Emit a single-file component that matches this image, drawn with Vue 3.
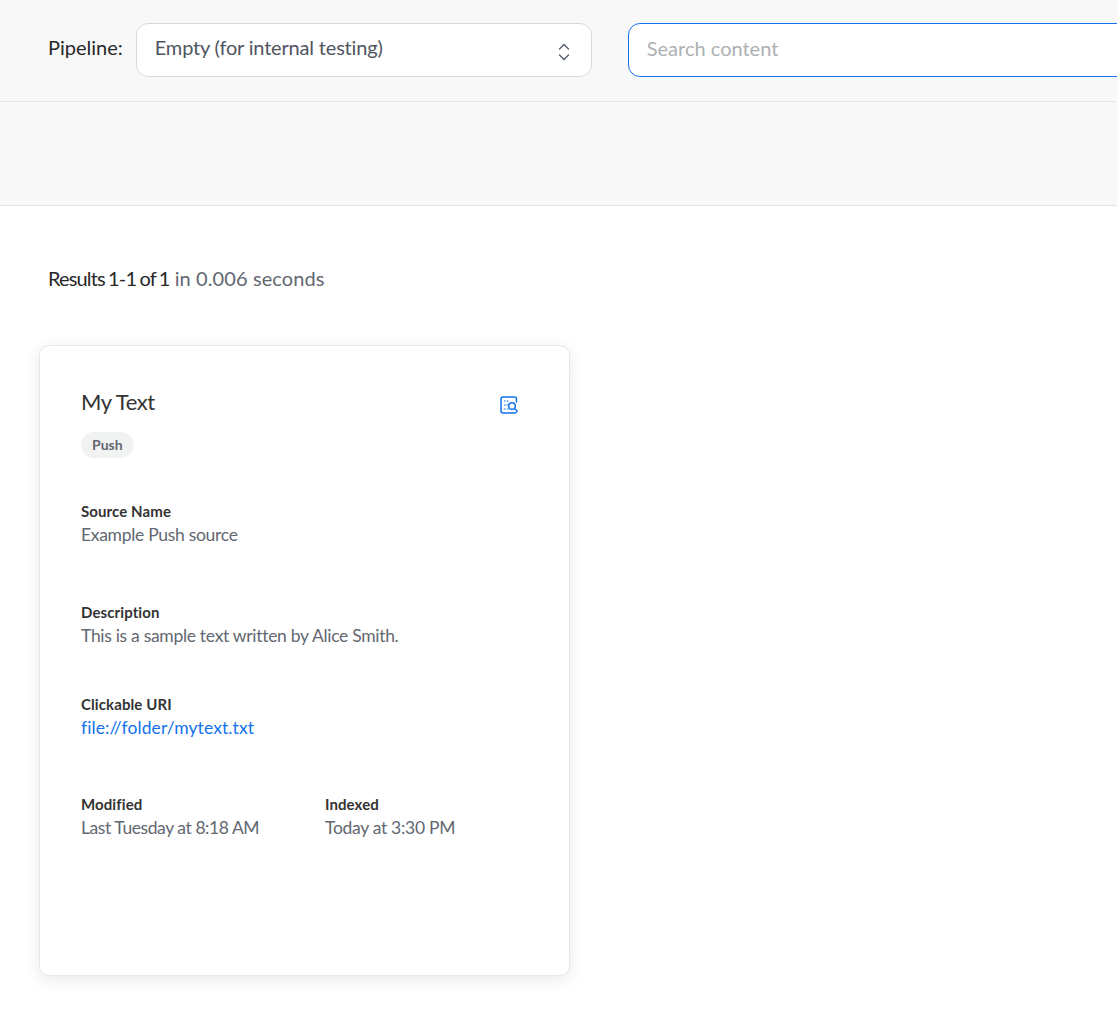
<script setup>
const fields = [
  { label: 'Source Name', value: 'Example Push source', cls: 'f-source' },
  { label: 'Description', value: 'This is a sample text written by Alice Smith.', cls: 'f-desc' },
]
</script>

<template>
  <div class="page">
    <header class="top">
      <div class="bar">
        <span class="pipe-label">Pipeline:</span>
        <div class="select">
          <span class="select-text">Empty (for internal testing)</span>
          <svg class="updown" width="12" height="18" viewBox="0 0 12 18" fill="none" stroke="#5c6370" stroke-width="1.5" stroke-linecap="round" stroke-linejoin="round">
            <path d="M1.5 6 L6 1.5 L10.5 6" />
            <path d="M1.5 12 L6 16.5 L10.5 12" />
          </svg>
        </div>
        <div class="search"><span class="placeholder">Search content</span></div>
      </div>
      <div class="subbar"></div>
    </header>
    <main class="main">
      <p class="summary"><span class="dark">Results 1-1 of 1</span> <span class="time">in 0.006 seconds</span></p>
      <article class="card">
        <div class="card-head">
          <h2 class="title">My Text</h2>
          <svg class="quick" width="20" height="20" viewBox="0 0 20 20" fill="none" stroke="#1372ec" stroke-width="1.5" stroke-linecap="round">
            <path d="M17.5 7 V4 A2 2 0 0 0 15.5 2 H4 A2 2 0 0 0 2 4 V16 A2 2 0 0 0 4 18 H15.5 A2 2 0 0 0 17.5 17" />
            <circle cx="13" cy="11" r="3.3" />
            <path d="M15.5 13.5 L18.2 16" />
            <path d="M5.5 6 H6 M8.5 6 H9 M5.5 10 H6 M8 10 H8.4 M5.5 14 H6 M8.5 14 H9" stroke-width="1.6" stroke-opacity="0.7" />
          </svg>
        </div>
        <span class="tag">Push</span>
        <div v-for="f in fields" :key="f.label" class="field" :class="f.cls">
          <div class="label">{{ f.label }}</div>
          <div class="value">{{ f.value }}</div>
        </div>
        <div class="field f-uri">
          <div class="label">Clickable URI</div>
          <a class="value link">file://folder/mytext.txt</a>
        </div>
        <div class="dates">
          <div class="field">
            <div class="label">Modified</div>
            <div class="value tight">Last Tuesday at 8:18 AM</div>
          </div>
          <div class="field">
            <div class="label">Indexed</div>
            <div class="value">Today at 3:30 PM</div>
          </div>
        </div>
      </article>
    </main>
  </div>
</template>

<style>
html, body { margin: 0; background: #fff; overflow: hidden; }
</style>

<style scoped>
.page {
  width: 1117px;
  height: 1011px;
  overflow: hidden;
  font-family: Lato, "Liberation Sans", sans-serif;
  color: #282829;
}
.top { background: #f8f8f8; border-bottom: 1px solid #e5e5e5; }
.bar {
  height: 102px;
  box-sizing: border-box;
  border-bottom: 1px solid #e5e5e5;
  display: flex;
  align-items: flex-start;
  padding: 23px 0 0 48px;
}
.subbar { height: 103px; }
.pipe-label { font-size: 20px; line-height: 48px; margin-right: 13px; }
.select {
  width: 456px;
  height: 54px;
  box-sizing: border-box;
  background: #fff;
  border: 1px solid #d6d9dc;
  border-radius: 12px;
  display: flex;
  align-items: center;
  justify-content: space-between;
  padding: 0 21px 0 18px;
  flex: none;
}
.select-text { font-size: 20px; color: #4f5561; margin-top: -7px; letter-spacing: -0.18px; }
.updown { flex: none; margin-top: 3px; }
.search {
  margin-left: 36px;
  width: 700px;
  height: 54px;
  flex: none;
  box-sizing: border-box;
  background: #fff;
  border: 1px solid #1372ec;
  border-radius: 12px;
  padding: 0 18px;
  display: flex;
  align-items: center;
}
.placeholder { font-size: 20px; color: #adb0b3; margin-top: -4px; }
.main { padding: 0 39px; }
.summary {
  margin: 59px 0 0 9px;
  font-size: 20px;
  line-height: 26px;
  color: #626771;
}
.dark { color: #282829; letter-spacing: -0.85px; word-spacing: -1px; }
.time { letter-spacing: 0.1px; }
.card {
  margin-top: 54px;
  width: 531px;
  height: 631px;
  box-sizing: border-box;
  background: #fff;
  border: 1px solid #e5e8e8;
  border-radius: 10px;
  box-shadow: 0 4px 16px rgba(40, 50, 60, 0.1);
  padding: 40px 50px 0 41px;
}
.card-head {
  display: flex;
  justify-content: space-between;
  align-items: flex-start;
}
.title { margin: 0; font-size: 22px; font-weight: 400; line-height: 32px; color: #333; letter-spacing: -0.4px; }
.quick { margin: 9px 0 0 0; }
.tag {
  display: inline-block;
  margin-top: 14px;
  height: 26px;
  line-height: 26px;
  padding: 0 11px;
  border-radius: 13px;
  background: #f1f2f2;
  font-size: 14px;
  font-weight: 700;
  color: #626771;
}
.field { line-height: 24px; }
.label { font-size: 15px; font-weight: 700; color: #333; line-height: 23px; letter-spacing: 0.1px; }
.value { font-size: 17.5px; color: #626771; line-height: 24px; display: block; letter-spacing: -0.3px; }
.tight { letter-spacing: -0.43px; }
.f-source { margin-top: 42px; }
.f-desc { margin-top: 54px; }
.f-uri { margin-top: 45px; }
.link { color: #1372ec; letter-spacing: 0.1px; }
.dates { margin-top: 53px; display: grid; grid-template-columns: 244px 1fr; }
</style>
